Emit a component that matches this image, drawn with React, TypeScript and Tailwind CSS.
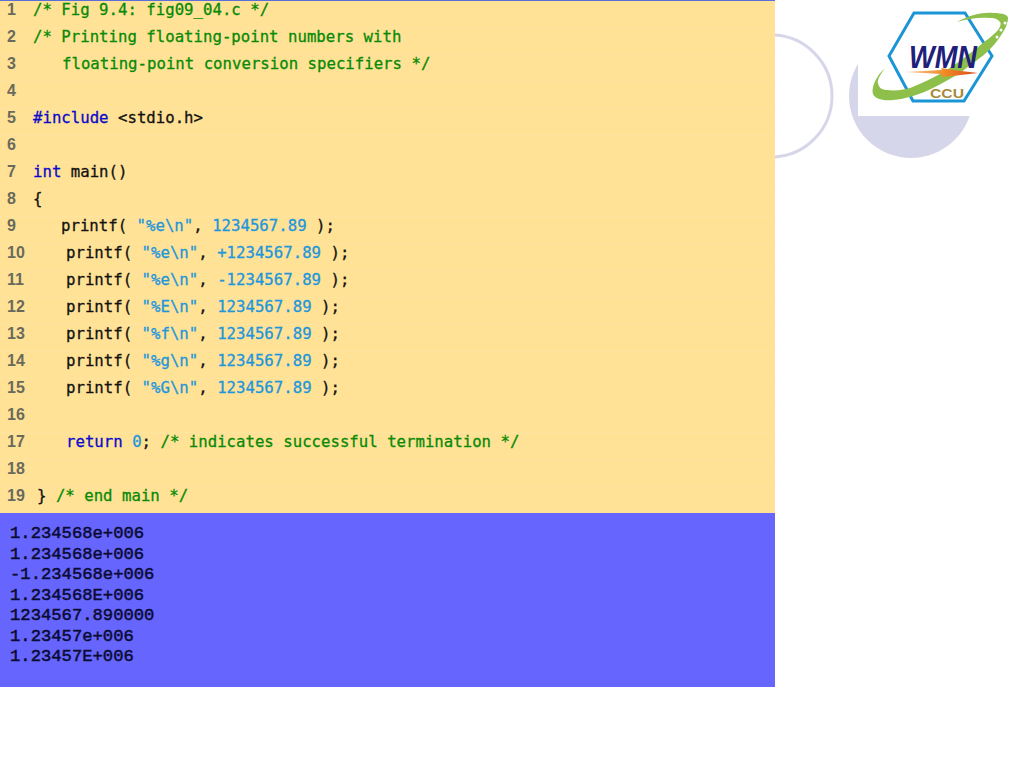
const FONT_MONO = "font-['DejaVu_Sans_Mono',monospace]";

type Token = { text: string; color: string };

const GREEN = "text-[#078a07]";
const BLUE = "text-[#0a0acc]";
const CYAN = "text-[#1e96dc]";
const BLACK = "text-[#111111]";

type Line = { indent: number; tokens: Token[] };

const printfLine = (fmt: string, value: string, indent: number): Line => ({
  indent,
  tokens: [
    { text: "printf( ", color: BLACK },
    { text: `"${fmt}"`, color: CYAN },
    { text: ", ", color: BLACK },
    { text: value, color: CYAN },
    { text: " );", color: BLACK },
  ],
});

const LINES: Line[] = [
  { indent: 26, tokens: [{ text: "/* Fig 9.4: fig09_04.c */", color: GREEN }] },
  { indent: 26, tokens: [{ text: "/* Printing floating-point numbers with", color: GREEN }] },
  { indent: 55, tokens: [{ text: "floating-point conversion specifiers */", color: GREEN }] },
  { indent: 26, tokens: [] },
  {
    indent: 26,
    tokens: [
      { text: "#include", color: BLUE },
      { text: " <stdio.h>", color: BLACK },
    ],
  },
  { indent: 26, tokens: [] },
  {
    indent: 26,
    tokens: [
      { text: "int", color: BLUE },
      { text: " main()", color: BLACK },
    ],
  },
  { indent: 26, tokens: [{ text: "{", color: BLACK }] },
  printfLine("%e\\n", "1234567.89", 54),
  printfLine("%e\\n", "+1234567.89", 59),
  printfLine("%e\\n", "-1234567.89", 59),
  printfLine("%E\\n", "1234567.89", 59),
  printfLine("%f\\n", "1234567.89", 59),
  printfLine("%g\\n", "1234567.89", 59),
  printfLine("%G\\n", "1234567.89", 59),
  { indent: 26, tokens: [] },
  {
    indent: 59,
    tokens: [
      { text: "return", color: BLUE },
      { text: " ", color: BLACK },
      { text: "0", color: CYAN },
      { text: "; ", color: BLACK },
      { text: "/* indicates successful termination */", color: GREEN },
    ],
  },
  { indent: 26, tokens: [] },
  {
    indent: 30,
    tokens: [
      { text: "} ", color: BLACK },
      { text: "/* end main */", color: GREEN },
    ],
  },
];

const OUTPUT = [
  "1.234568e+006",
  "1.234568e+006",
  "-1.234568e+006",
  "1.234568E+006",
  "1234567.890000",
  "1.23457e+006",
  "1.23457E+006",
];

function Logo() {
  return (
    <svg viewBox="0 0 249 170" className="h-[170px] w-[249px]">
      <defs>
        <linearGradient id="arrow" x1="0" x2="1" y1="0" y2="0">
          <stop offset="0" stopColor="#f6c9a0" />
          <stop offset="0.55" stopColor="#f08a24" />
          <stop offset="1" stopColor="#d9481c" />
        </linearGradient>
      </defs>
      <circle cx="-4" cy="96" r="61" fill="none" stroke="#d6d6ea" strokeWidth="3" />
      <circle cx="136" cy="96" r="62" fill="#d6d6ea" />
      <rect x="83" y="20" width="125" height="96" fill="#ffffff" />
      <polygon points="139,13 190,13 217,56 189,101 138,101 114,56" fill="#ffffff" stroke="#1b95d6" strokeWidth="3" />
      <path
        d="M182 22C195 15 208 12 218 13C228 13 234 15 233 19C232 27 228 32 225 37C216 50 208 56 198 63C186 73 172 81 158 88C144 95 130 99 118 100C108 101 100 99 98 94C96 88 101 76 110 68C105 75 102 80 103 83C104 88 107 90 112 90C120 91 128 90 135 88C148 83 160 77 172 70C182 63 192 56 202 48C210 41 218 36 223 30C226 26 226 23 225 22C222 18 218 18 215 18C204 17 192 19 182 22Z"
        fill="#8dbf4a"
      />
      <circle cx="230" cy="23" r="1.500" fill="#ffffff" />
      <circle cx="226" cy="30" r="1.500" fill="#ffffff" />
      <circle cx="222" cy="37" r="1.500" fill="#ffffff" />
      <text
        x="134"
        y="68"
        fill="#20207a"
        fontFamily="Liberation Sans"
        fontSize="32"
        fontStyle="italic"
        fontWeight="700"
        textLength="68"
        lengthAdjust="spacingAndGlyphs"
      >
        WMN
      </text>
      <path d="M130 72L167 70L166 68L182 70.500L203 73L182 75.500L167 77L166 74Z" fill="url(#arrow)" />
      <text
        x="155"
        y="98"
        fill="#a68a3a"
        fontFamily="Liberation Sans"
        fontSize="12"
        fontWeight="700"
        textLength="34"
        lengthAdjust="spacingAndGlyphs"
      >
        CCU
      </text>
    </svg>
  );
}

export default function App() {
  return (
    <div className="flex h-[768px] w-[1024px] overflow-hidden bg-white">
      <div className="w-[775px] shrink-0">
        <div className="border-t border-[#5a6fd8] bg-[#ffe296]">
          <div className="flex h-[512px] flex-col">
            {LINES.map((line, i) => (
              <div key={i} className="flex h-[27px] shrink-0 items-start border-b border-[#ffe49f] last:h-[26px] last:border-b-0">
                <span className="w-0 shrink-0 pl-[7px] font-['Liberation_Sans',sans-serif] text-[16px] leading-[18px] font-bold whitespace-nowrap text-[#6a6a5c]">
                  {i + 1}
                </span>
                <span
                  className={`${FONT_MONO} text-[15.7px] leading-[18px] whitespace-pre [-webkit-text-stroke:0.3px]`}
                  style={{ marginLeft: line.indent }}
                >
                  {line.tokens.map((t, j) => (
                    <span key={j} className={t.color}>
                      {t.text}
                    </span>
                  ))}
                </span>
              </div>
            ))}
          </div>
        </div>
        <div className="h-[174px] bg-[#6666ff] pt-[11px] pl-[10px] font-['Liberation_Mono',monospace] text-[17.2px] leading-[20.5px] text-[#0b0b33] [-webkit-text-stroke:0.5px]">
          {OUTPUT.map((row, i) => (
            <div key={i}>{row}</div>
          ))}
        </div>
      </div>
      <div className="flex-1">
        <Logo />
      </div>
    </div>
  );
}
